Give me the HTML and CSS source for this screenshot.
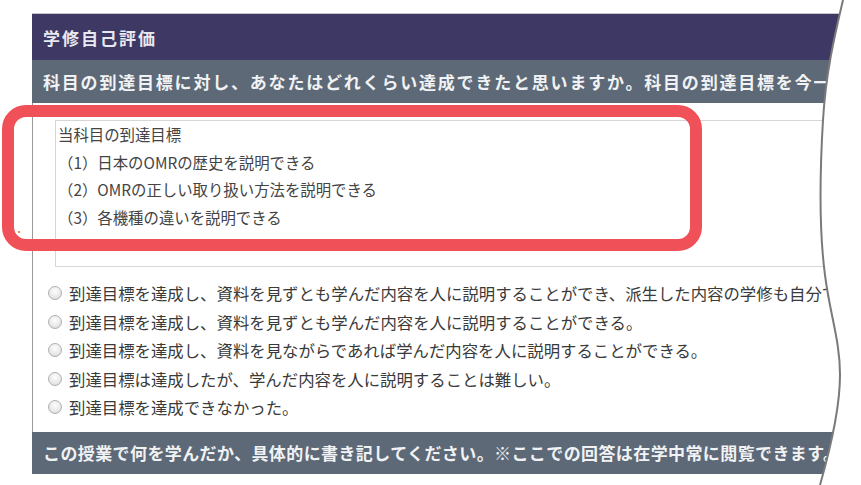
FILE: index.html
```html
<!DOCTYPE html>
<html lang="ja">
<head>
<meta charset="utf-8">
<title>学修自己評価</title>
<link rel="stylesheet" href="styles.css">
</head>
<body>
<div class="page">
  <section class="panel">
    <div class="title">学修自己評価</div>
    <div class="sub">科目の到達目標に対し、あなたはどれくらい達成できたと思いますか。科目の到達目標を今一度確認してください。</div>
    <div class="content">
      <div class="goals">
        <div>当科目の到達目標</div>
        <div>（1）日本のOMRの歴史を説明できる</div>
        <div>（2）OMRの正しい取り扱い方法を説明できる</div>
        <div>（3）各機種の違いを説明できる</div>
      </div>
      <ul class="options">
        <li><span class="radio"></span>到達目標を達成し、資料を見ずとも学んだ内容を人に説明することができ、派生した内容の学修も自分でできる。</li>
        <li><span class="radio"></span>到達目標を達成し、資料を見ずとも学んだ内容を人に説明することができる。</li>
        <li><span class="radio"></span>到達目標を達成し、資料を見ながらであれば学んだ内容を人に説明することができる。</li>
        <li><span class="radio"></span>到達目標は達成したが、学んだ内容を人に説明することは難しい。</li>
        <li><span class="radio"></span>到達目標を達成できなかった。</li>
      </ul>
    </div>
    <div class="foot">この授業で何を学んだか、具体的に書き記してください。※ここでの回答は在学中常に閲覧できます。</div>
  </section>
  <div class="highlight"></div>
  <span class="dot"></span>
  <svg class="tear" width="861" height="485" viewBox="0 0 861 485">
    <path class="tear-fill" d="M843,0 C836,30 826,70 823,120 C820,170 819,230 825,275 C830,315 840,340 840,375 C840,410 830,450 820,485 L861,485 L861,0 Z"/>
    <path class="tear-line" d="M843,0 C836,30 826,70 823,120 C820,170 819,230 825,275 C830,315 840,340 840,375 C840,410 830,450 820,485"/>
  </svg>
</div>
</body>
</html>
```
FILE: styles.css
```css
html, body {
  margin: 0;
  padding: 0;
  background: #ffffff;
}
body {
  width: 861px;
  height: 485px;
  overflow: hidden;
  font-family: "Noto Sans CJK JP", "Noto Sans", sans-serif;
}
.page {
  position: relative;
  width: 861px;
  height: 485px;
  overflow: hidden;
}
.panel {
  margin: 13px 0 0 32px;
  width: 860px;
  border-top: 1px solid #c8c8cc;
}
.title {
  height: 46px;
  background: #3e3865;
  color: #e8e8f0;
  font-size: 17px;
  font-weight: bold;
  letter-spacing: 2px;
  padding-left: 11px;
  display: flex;
  align-items: center;
}
.sub {
  height: 43px;
  background: #5d6977;
  color: #f0f2f4;
  font-size: 17px;
  font-weight: bold;
  letter-spacing: 1.8px;
  padding-left: 11px;
  display: flex;
  align-items: center;
  white-space: nowrap;
  overflow: hidden;
}
.content {
  border-left: 1px solid #9a9a9a;
  padding: 17px 0 10px 0;
}
.goals {
  margin-left: 22px;
  height: 147px;
  box-sizing: border-box;
  border: 1px solid #d6d6d6;
  border-right: none;
  padding: 0 0 0 2px;
  color: #444;
  font-size: 15.4px;
  line-height: 27.7px;
}
.options {
  list-style: none;
  margin: 12px 0 0 0;
  padding: 0 0 0 15px;
  color: #3a3a3a;
  font-size: 16.4px;
}
.options li {
  height: 28.5px;
  display: flex;
  align-items: center;
  gap: 7px;
  white-space: nowrap;
}
.radio {
  flex: none;
  width: 14px;
  height: 14px;
  box-sizing: border-box;
  border-radius: 50%;
  border: 1px solid #b0b0b0;
  background: radial-gradient(circle at 50% 35%, #fdfdfd 0%, #e8e8e8 60%, #d0d0d0 100%);
}
.foot {
  height: 42px;
  background: #5d6977;
  color: #f0f2f4;
  font-size: 17px;
  font-weight: bold;
  letter-spacing: 0.4px;
  padding-left: 11px;
  display: flex;
  align-items: center;
  white-space: nowrap;
  overflow: hidden;
}
.highlight {
  position: absolute;
  left: 2px;
  top: 105px;
  width: 676px;
  height: 122px;
  border: 12px solid #f05058;
  border-radius: 24px;
}
.dot {
  position: absolute;
  left: 18px;
  top: 231px;
  width: 2px;
  height: 2px;
  background: #f08a50;
}
.tear {
  position: absolute;
  left: 0;
  top: 0;
}
.tear-fill {
  fill: #ffffff;
}
.tear-line {
  fill: none;
  stroke: #7a7a7a;
  stroke-width: 2;
}
```
